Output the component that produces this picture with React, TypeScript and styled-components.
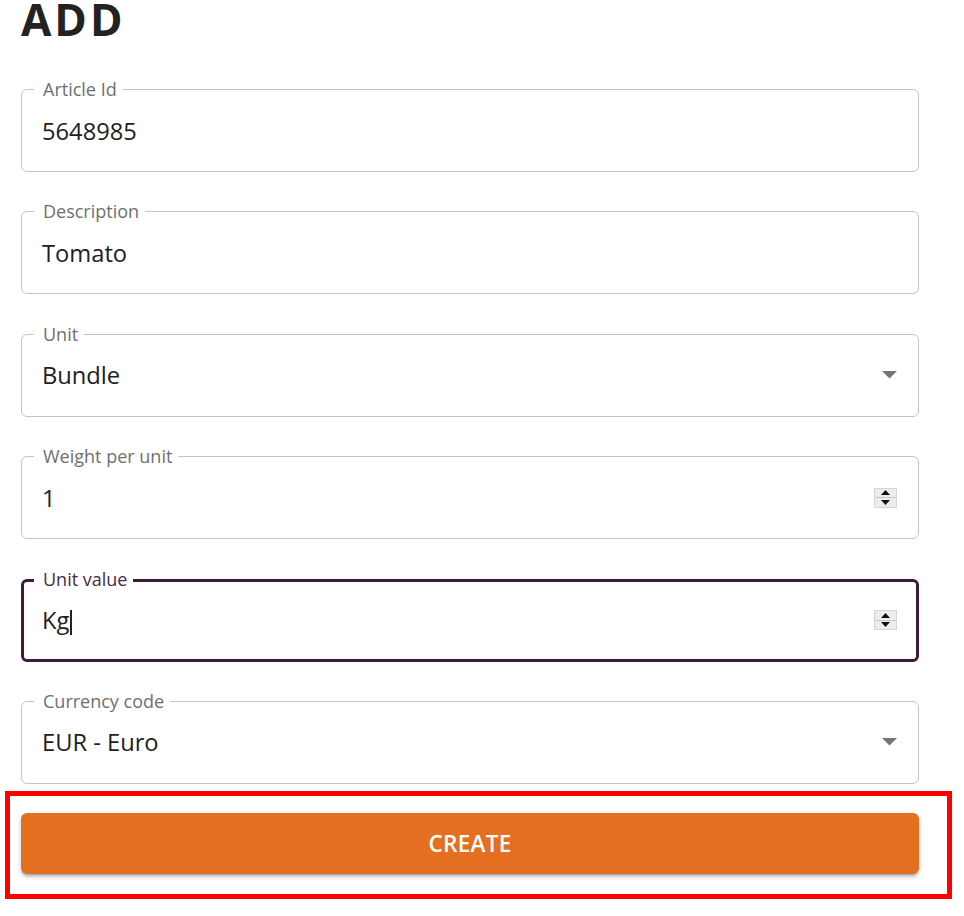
import React from "react";
import styled, { createGlobalStyle, css } from "styled-components";

const GlobalStyle = createGlobalStyle`
  html, body {
    margin: 0;
    padding: 0;
    background: #ffffff;
  }
  body {
    font-family: "Open Sans", "Noto Sans", sans-serif;
    color: #212121;
  }
`;

const Page = styled.div`
  width: 898px;
  padding-left: 21px;
`;

const Title = styled.h1`
  margin: 0;
  font-size: 44px;
  line-height: 38px;
  font-weight: 700;
  letter-spacing: 3px;
  color: #222222;
`;

const Form = styled.form`
  display: flex;
  flex-direction: column;
  gap: 39.4px;
  margin-top: 51px;
`;

const Field = styled.div<{ $focused?: boolean }>`
  position: relative;
  box-sizing: border-box;
  height: 83px;
  display: flex;
  align-items: center;
  padding: 0 20px;
  border: 1px solid #c4c4c4;
  border-radius: 6px;
  ${(p) =>
    p.$focused &&
    css`
      border: 3px solid #3d1c3a;
      padding: 0 18px;
    `}
`;

const Label = styled.span<{ $focused?: boolean }>`
  position: absolute;
  top: ${(p) => (p.$focused ? "-14px" : "-12px")};
  left: ${(p) => (p.$focused ? "10px" : "12px")};
  padding: 0 6px 0 9px;
  background: #ffffff;
  font-size: 18px;
  line-height: 22px;
  color: ${(p) => (p.$focused ? "#4b2a48" : "#6f6f6f")};
  white-space: nowrap;
`;

const Value = styled.span`
  flex: 1;
  display: flex;
  align-items: center;
  font-size: 23.7px;
  line-height: 32px;
  color: #212121;
`;

const Caret = styled.span`
  display: inline-block;
  width: 1.5px;
  height: 25px;
  margin-left: 1px;
  margin-top: 5px;
  background: #222222;
`;

const Adornment = styled.span`
  display: flex;
  align-items: center;
  justify-content: center;
  margin-right: 1px;
`;

const Spinner = styled.span`
  box-sizing: border-box;
  width: 23px;
  height: 20px;
  display: flex;
  flex-direction: column;
  background: #ececec;
  border: 1px solid #d6d6d6;
`;

const SpinHalf = styled.span<{ $top?: boolean }>`
  flex: 1;
  display: flex;
  align-items: center;
  justify-content: center;
  ${(p) => p.$top && css`border-bottom: 1px solid #c8c8c8;`}
`;

const Highlight = styled.div`
  box-sizing: border-box;
  width: 947px;
  margin: 7px 0 0 -16px;
  padding: 17px 28px 20px 11px;
  border: 5px solid #ff0000;
`;

const CreateButton = styled.button`
  display: block;
  width: 100%;
  height: 61px;
  border: none;
  border-radius: 6px;
  background: #e46f20;
  color: #ffffff;
  font-family: "Open Sans", "Noto Sans", sans-serif;
  font-size: 22.5px;
  font-weight: 600;
  letter-spacing: 0.3px;
  text-transform: uppercase;
  box-shadow: 0 4px 2px -3px rgba(0, 0, 0, 0.2), 0 3px 3px 0 rgba(0, 0, 0, 0.14),
    0 2px 7px 0 rgba(0, 0, 0, 0.12);
  cursor: pointer;
`;

const DropArrow = () => (
  <svg width="15" height="8" viewBox="0 0 15 8" aria-hidden="true">
    <path d="M0 0 H15 L7.5 7.5 Z" fill="#757575" />
  </svg>
);

const SpinButtons = () => (
  <Spinner>
    <SpinHalf $top>
      <svg width="9" height="5" viewBox="0 0 9 5" aria-hidden="true">
        <path d="M0 5 L4.5 0 L9 5 Z" fill="#111" />
      </svg>
    </SpinHalf>
    <SpinHalf>
      <svg width="9" height="5" viewBox="0 0 9 5" aria-hidden="true">
        <path d="M0 0 L9 0 L4.5 5 Z" fill="#111" />
      </svg>
    </SpinHalf>
  </Spinner>
);

type FieldDef = {
  label: string;
  value: string;
  kind?: "select" | "number";
  focused?: boolean;
};

const fields: FieldDef[] = [
  { label: "Article Id", value: "5648985" },
  { label: "Description", value: "Tomato" },
  { label: "Unit", value: "Bundle", kind: "select" },
  { label: "Weight per unit", value: "1", kind: "number" },
  { label: "Unit value", value: "Kg", kind: "number", focused: true },
  { label: "Currency code", value: "EUR - Euro", kind: "select" },
];

export default function App() {
  return (
    <>
      <GlobalStyle />
      <Page>
        <Title>ADD</Title>
        <Form onSubmit={(e) => e.preventDefault()}>
          {fields.map((f) => (
            <Field key={f.label} $focused={f.focused}>
              <Label $focused={f.focused}>{f.label}</Label>
              <Value>
                {f.value}
                {f.focused && <Caret />}
              </Value>
              {f.kind === "select" && (
                <Adornment>
                  <DropArrow />
                </Adornment>
              )}
              {f.kind === "number" && (
                <Adornment>
                  <SpinButtons />
                </Adornment>
              )}
            </Field>
          ))}
        </Form>
        <Highlight>
          <CreateButton type="button">Create</CreateButton>
        </Highlight>
      </Page>
    </>
  );
}
